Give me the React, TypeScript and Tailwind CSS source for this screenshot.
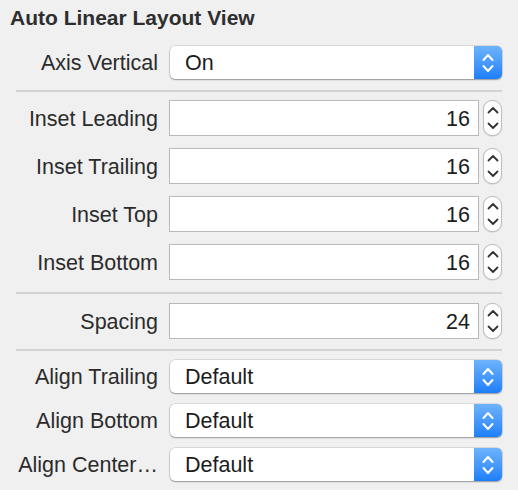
import React from "react";

const font = { fontFamily: '"Liberation Sans", Arial, sans-serif' };

function UpDownBlue() {
  return (
    <svg width={12} height={22} viewBox="0 0 12 22" fill="none">
      <path d="M1.5 8 L6 3 L10.5 8" stroke="#ffffff" strokeWidth={2} strokeLinecap="round" strokeLinejoin="round" />
      <path d="M1.5 14 L6 19 L10.5 14" stroke="#ffffff" strokeWidth={2} strokeLinecap="round" strokeLinejoin="round" />
    </svg>
  );
}

function UpDownStep() {
  return (
    <svg width={12} height={24} viewBox="0 0 12 24" fill="none">
      <path d="M1.5 6.5 L6 2 L10.5 6.5" stroke="#333333" strokeWidth={1.8} strokeLinecap="round" strokeLinejoin="round" />
      <path d="M1.5 17.5 L6 22 L10.5 17.5" stroke="#333333" strokeWidth={1.8} strokeLinecap="round" strokeLinejoin="round" />
    </svg>
  );
}

function Label({ text }: { text: string }) {
  return (
    <div className="w-[159px] shrink-0 text-right text-[21.5px] text-[#2b2b2b] pr-[1px] pt-[2px] whitespace-nowrap">{text}</div>
  );
}

function Popup({ label, value }: { label: string; value: string }) {
  return (
    <div className="flex items-center h-[33px]">
      <Label text={label} />
      <div className="ml-[11px] w-[332px] h-[33px] flex bg-white rounded-[5px] shadow-[0_0_0_0.5px_rgba(0,0,0,0.18),0_1px_1.5px_rgba(0,0,0,0.3)]">
        <div className="flex-1 flex items-center pl-[15px] pt-[2px] text-[21.5px] text-[#1c1c1c]">{value}</div>
        <div className="w-[28px] h-full rounded-r-[5px] bg-gradient-to-b from-[#6db3fb] to-[#1b7ffa] flex items-center justify-center">
          <UpDownBlue />
        </div>
      </div>
    </div>
  );
}

function Field({ label, value }: { label: string; value: string }) {
  return (
    <div className="flex items-center h-[36px]">
      <Label text={label} />
      <div className="ml-[10px] w-[310px] h-[36px] bg-white border border-[#b9b9b9] flex items-center justify-end pr-[8px] pt-[2px] text-[21.5px] text-[#1c1c1c]">
        {value}
      </div>
      <div className="ml-[4px] w-[19px] h-[36px] bg-white rounded-[9px] border border-[#bdbdbd] shadow-[0_0.5px_1px_rgba(0,0,0,0.15)] flex items-center justify-center">
        <UpDownStep />
      </div>
    </div>
  );
}

function Sep() {
  return <div className="ml-[16px] w-[486px] h-[2px] bg-[#d3d3d3]" />;
}

export default function App() {
  return (
    <div className="w-[518px] h-[490px] bg-[#f0f0f0] overflow-hidden" style={font}>
      <div className="h-[46px] pl-[10px] pt-[4px] text-[21px] font-bold text-[#2e2e2e] leading-[28px]">
        Auto Linear Layout View
      </div>
      <Popup label="Axis Vertical" value="On" />
      <div className="mt-[11px]">
        <Sep />
      </div>
      <div className="mt-[8px] flex flex-col gap-[12px]">
        <Field label="Inset Leading" value="16" />
        <Field label="Inset Trailing" value="16" />
        <Field label="Inset Top" value="16" />
        <Field label="Inset Bottom" value="16" />
      </div>
      <div className="mt-[12px]">
        <Sep />
      </div>
      <div className="mt-[9px]">
        <Field label="Spacing" value="24" />
      </div>
      <div className="mt-[10px]">
        <Sep />
      </div>
      <div className="mt-[9px] flex flex-col gap-[11px]">
        <Popup label="Align Trailing" value="Default" />
        <Popup label="Align Bottom" value="Default" />
        <Popup label="Align Center…" value="Default" />
      </div>
    </div>
  );
}
